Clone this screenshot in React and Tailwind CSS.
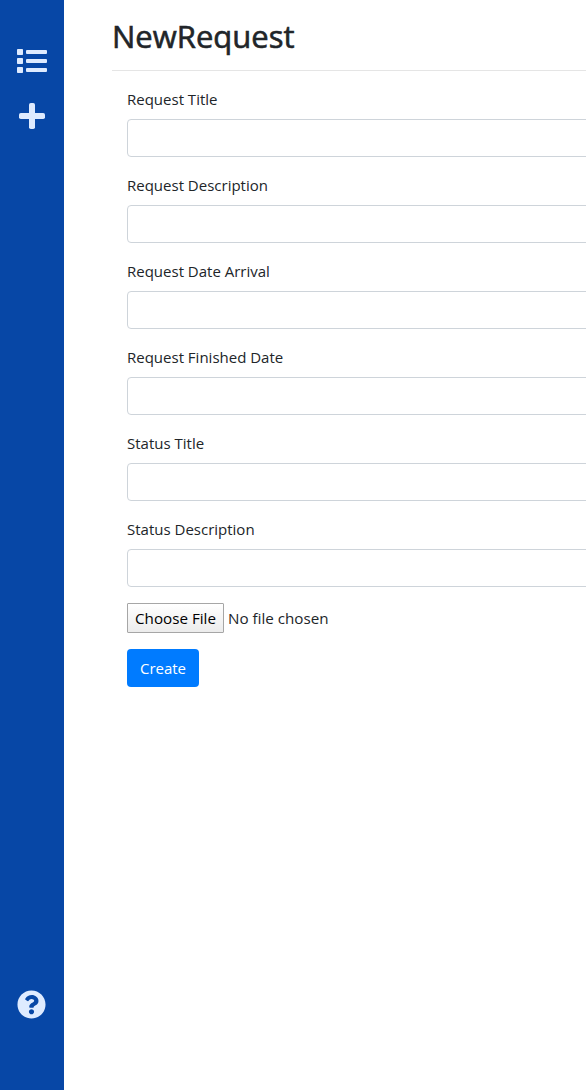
import React from "react";
import { FaQuestionCircle } from "react-icons/fa";

const fields = [
  "Request Title",
  "Request Description",
  "Request Date Arrival",
  "Request Finished Date",
  "Status Title",
  "Status Description",
];

function ListIcon() {
  return (
    <svg viewBox="0 0 30 24" className="mt-[49px] h-6 w-[30px] shrink-0" fill="currentColor">
      {[0, 9, 18].map((y) => (
        <g key={y}>
          <rect x="0" y={y} width="6" height="6" rx="0.8" />
          <rect x="9" y={y + 1} width="21" height="4" rx="1" />
        </g>
      ))}
    </svg>
  );
}

function PlusIcon() {
  return (
    <svg viewBox="0 0 26 26" className="mt-[30px] size-[26px] shrink-0" fill="currentColor">
      <rect x="10" y="0" width="6" height="26" rx="1.8" />
      <rect x="0" y="10" width="26" height="6" rx="1.8" />
    </svg>
  );
}

export default function App() {
  return (
    <div className="flex h-[1090px] w-full overflow-hidden bg-white font-['Open_Sans',sans-serif] text-[15px] leading-6 text-[#212529]">
      <aside className="flex w-16 shrink-0 flex-col items-center bg-[#0747a6] text-[#deebff]">
        <ListIcon />
        <PlusIcon />
        <FaQuestionCircle className="mt-auto mr-px mb-[71px] size-[29px]" />
      </aside>
      <main className="w-[900px] shrink-0 pl-12">
        <h1 className="mt-[17px] text-[31px] leading-[38px] font-medium [-webkit-text-stroke:0.6px_#212529]">NewRequest</h1>
        <hr className="mt-[15px] border-black/10" />
        <form className="flex flex-col items-start pt-4 pl-[15px]">
          {fields.map((label) => (
            <label key={label} className="mb-4 block w-full">
              <span className="mb-2 block">{label}</span>
              <input className="block h-[38px] w-full rounded border border-[#ced4da] px-3 outline-none" />
            </label>
          ))}
          <div className="flex h-[30px] items-center gap-1">
            <button type="button" className="h-[30px] w-[97px] rounded-[1px] border border-[#a6a6a6] bg-linear-to-b from-white to-[#ececec] text-[15.2px] text-black">Choose File</button>
            <span className="text-[15.2px]">No file chosen</span>
          </div>
          <button type="button" className="mt-4 h-[38px] w-[72px] rounded bg-[#007bff] text-white">Create</button>
        </form>
      </main>
    </div>
  );
}
